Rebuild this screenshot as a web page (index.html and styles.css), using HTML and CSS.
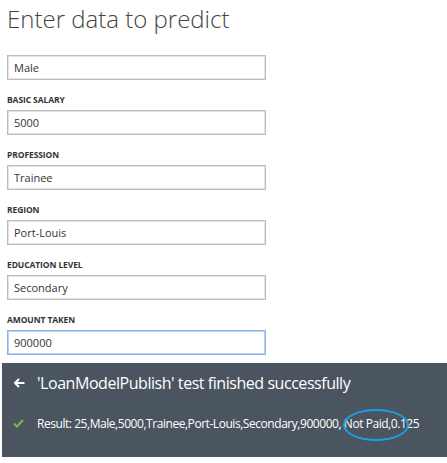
FILE: index.html
```html
<!DOCTYPE html>
<html>
<head>
<meta charset="utf-8">
<link rel="stylesheet" href="styles.css">
</head>
<body>
<div class="page">
  <h1 class="title">Enter data to predict</h1>
  <div class="form">
    <div class="field first">
      <div class="input">Male</div>
    </div>
    <div class="field">
      <div class="label">BASIC SALARY</div>
      <div class="input">5000</div>
    </div>
    <div class="field">
      <div class="label">PROFESSION</div>
      <div class="input">Trainee</div>
    </div>
    <div class="field">
      <div class="label">REGION</div>
      <div class="input">Port-Louis</div>
    </div>
    <div class="field">
      <div class="label">EDUCATION LEVEL</div>
      <div class="input">Secondary</div>
    </div>
    <div class="field">
      <div class="label">AMOUNT TAKEN</div>
      <div class="input focus">900000</div>
    </div>
  </div>
  <div class="panel">
    <div class="panel-head">
      <svg class="arrow" width="11" height="10" viewBox="0 0 11 10"><path d="M5 1 L1 5 L5 9 M1 5 H10.5" fill="none" stroke="#fff" stroke-width="2"/></svg>
      <span class="head-text">'LoanModelPublish' test finished successfully</span>
    </div>
    <div class="result">
      <svg class="check" width="11" height="9" viewBox="0 0 11 9"><path d="M1 4.5 L4 7.5 L10 1" fill="none" stroke="#7ab648" stroke-width="2"/></svg>
      <span class="result-text">Result: 25,Male,5000,Trainee,Port-Louis,Secondary,900000, Not Paid,0.125</span>
      <span class="ring"></span>
    </div>
  </div>
</div>
</body>
</html>
```
FILE: styles.css
```css
html, body {
  margin: 0;
  padding: 0;
  background: #fff;
}
.page {
  width: 447px;
  height: 463px;
  font-family: "Open Sans", "Noto Sans", sans-serif;
  color: #333;
}
.title {
  margin: 0;
  padding: 4px 0 0 7px;
  font-size: 24px;
  font-weight: 300;
  line-height: 30px;
  color: #444;
  letter-spacing: 0;
}
.form {
  padding: 21px 0 0 7px;
}
.field {
  margin-top: 14px;
}
.field.first {
  margin-top: 0;
}
.label {
  font-size: 8.5px;
  font-weight: 700;
  line-height: 12px;
  margin-bottom: 4px;
  color: #333;
  letter-spacing: -0.1px;
}
.input {
  box-sizing: border-box;
  width: 259px;
  height: 25px;
  border: 1px solid #bdbdbd;
  box-shadow: inset 0 0 0 1px #e4e4e4;
  padding: 0 6px;
  font-size: 11px;
  line-height: 23px;
  color: #333;
}
.input.focus {
  border-color: #8db2e8;
  box-shadow: inset 0 0 0 1px #b8d0f4;
}
.panel {
  margin: 8px 0 0 2px;
  height: 94px;
  background: #4b5560;
  color: #fff;
}
.panel-head {
  display: flex;
  align-items: center;
  height: 40px;
  padding: 0 0 0 12px;
}
.arrow {
  flex: none;
  margin-right: 12px;
}
.head-text {
  font-size: 16px;
  line-height: 20px;
  letter-spacing: -0.45px;
}
.result {
  position: relative;
  display: flex;
  align-items: center;
  height: 40px;
  padding: 0 0 0 11px;
}
.check {
  flex: none;
  margin-right: 13px;
}
.result-text {
  font-size: 12px;
  letter-spacing: -0.45px;
  word-spacing: 0;
}
.ring {
  position: absolute;
  left: 341px;
  top: 6px;
  width: 66px;
  height: 32px;
  border: 2px solid #17a2e4;
  border-radius: 50%;
  box-sizing: border-box;
}
```
